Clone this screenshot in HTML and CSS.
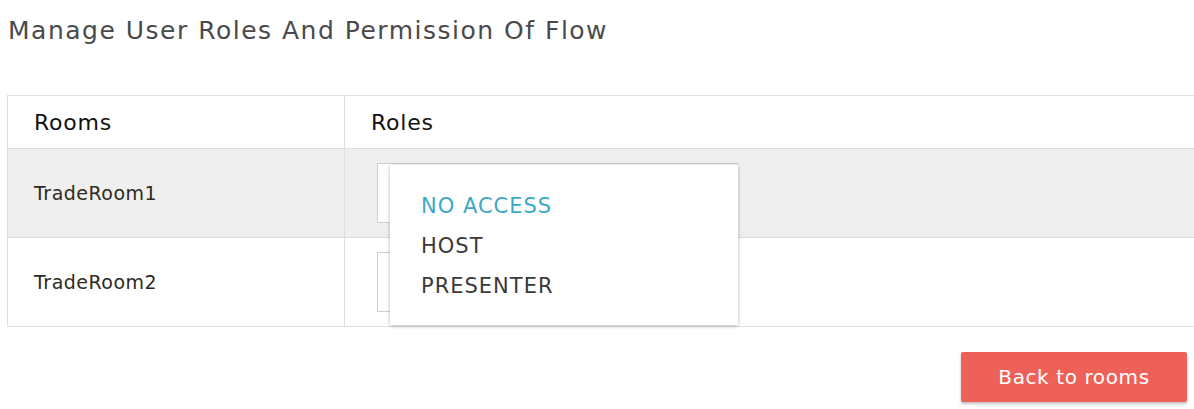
FILE: index.html
```html
<!DOCTYPE html>
<html>
<head>
<meta charset="utf-8">
<link rel="stylesheet" href="styles.css">
</head>
<body>
<div class="page">
  <h1 class="title">Manage User Roles And Permission Of Flow</h1>
  <div class="table-wrap">
    <table class="roles-table">
      <thead>
        <tr><th class="col-room">Rooms</th><th class="col-role">Roles</th></tr>
      </thead>
      <tbody>
        <tr class="row-alt">
          <td class="col-room">TradeRoom1</td>
          <td class="col-role"><div class="select"></div></td>
        </tr>
        <tr>
          <td class="col-room">TradeRoom2</td>
          <td class="col-role"><div class="select"></div></td>
        </tr>
      </tbody>
    </table>
    <ul class="dropdown">
      <li class="opt active">NO ACCESS</li>
      <li class="opt">HOST</li>
      <li class="opt">PRESENTER</li>
    </ul>
  </div>
  <div class="actions">
    <button class="btn-back">Back to rooms</button>
  </div>
</div>
</body>
</html>
```
FILE: styles.css
```css
html, body { margin: 0; padding: 0; background: #fff; overflow: hidden; }
body { font-family: "DejaVu Sans", sans-serif; color: #333; }
.page { width: 1194px; height: 409px; }
.title {
  margin: 0;
  padding: 14px 0 0 8px;
  height: 95px;
  box-sizing: border-box;
  font-size: 25px;
  font-weight: 400;
  letter-spacing: 1.5px;
  color: #4a4a4a;
  line-height: 34px;
}
.table-wrap { position: relative; margin-left: 7px; }
.roles-table {
  border-collapse: collapse;
  width: 1220px;
  table-layout: fixed;
}
.roles-table th, .roles-table td {
  border: 1px solid #dedede;
  text-align: left;
  padding: 0 0 0 26px;
}
.roles-table th {
  height: 52px;
  font-size: 22px;
  font-weight: 400;
  letter-spacing: 0.8px;
  color: #111;
}
.roles-table td { height: 88px; font-size: 19px; letter-spacing: 0.5px; color: #2f2a20; }
.col-room { width: 310px; }
.row-alt td { background: #efefef; }
.roles-table td.col-role { padding-left: 32px; }
.select {
  width: 359px;
  height: 58px;
  border: 1px solid #cfcfcf;
  background: #fff;
}
.dropdown {
  position: absolute;
  left: 383px;
  top: 70px;
  width: 348px;
  height: 160px;
  margin: 0;
  padding: 26px 0 0 0;
  box-sizing: border-box;
  list-style: none;
  background: #fff;
  box-shadow: 0 1px 4px rgba(0,0,0,0.28);
}
.opt {
  padding-left: 31px;
  height: 40px;
  line-height: 30px;
  font-size: 21px;
  letter-spacing: 1px;
  color: #3a3a3a;
}
.opt.active { color: #3aa9c6; }
.actions { display: flex; justify-content: flex-end; padding: 25px 7px 0 0; }
.btn-back {
  width: 226px;
  height: 50px;
  border: none;
  border-radius: 2px;
  background: #ee6158;
  color: #fff;
  font-family: inherit;
  font-size: 20px;
  letter-spacing: 0.6px;
  box-shadow: 0 2px 3px rgba(0,0,0,0.25);
}
```
